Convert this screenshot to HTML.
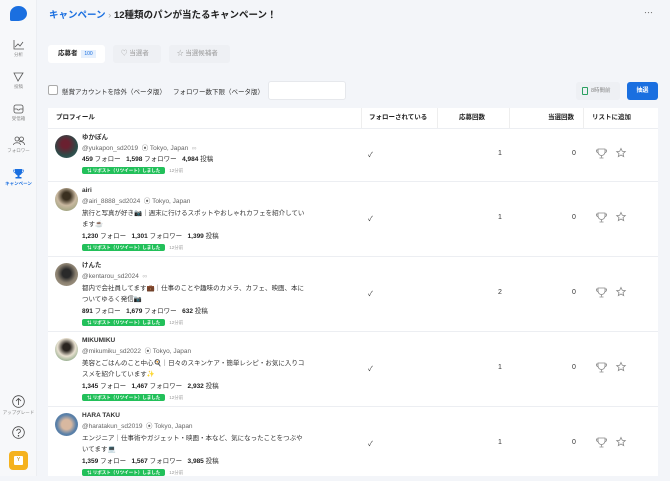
<!DOCTYPE html>
<html><head><meta charset="utf-8"><style>
*{box-sizing:border-box;margin:0;padding:0}
body{width:670px;height:476px;overflow:hidden;background:#f3f5f9;font-family:"Liberation Sans","Noto Sans CJK JP",sans-serif;color:#222;position:relative;font-size:7px}
.side{position:absolute;left:0;top:0;width:37px;height:476px;background:#f7f8fa;border-right:1px solid #eceef2}
.si{position:absolute;left:0;width:37px;text-align:center;font-size:4.5px;color:#888}
.si svg{display:block;margin:0 auto 2px}
.bc{position:absolute;left:49px;top:7px;font-size:9.5px;font-weight:bold}
.tab{position:absolute;top:45px;height:18px;border-radius:3px;font-size:6.5px;line-height:18px;padding-left:10px}
.tbl{position:absolute;left:48px;top:108px;width:610px;height:368px;background:#fff}
.hd{position:absolute;top:0;height:20px;line-height:20px;font-weight:bold;font-size:6.5px;border-right:1px solid #eee}
.row{position:absolute;left:0;width:610px;border-top:1px solid #eceef2}
.av{position:absolute;left:7px;width:23px;height:23px;border-radius:50%}
.tx{position:absolute;left:34px;font-size:6.5px;line-height:11.4px;color:#333;white-space:nowrap}
.tx b{color:#222}
.nm{font-weight:bold}
.badge{display:inline-block;background:#22c05a;color:#fff;font-size:4.5px;line-height:7px;padding:0 5px;border-radius:2px;font-weight:bold;vertical-align:middle}
.tm{font-size:4.5px;color:#999;margin-left:4px}
.g{color:#666}
.c{position:absolute;font-size:7px;color:#333}
.ic{position:absolute}
</style></head><body>
<div class="side">
 <div style="position:absolute;left:10px;top:6px;width:17px;height:15px;background:#1a6fe0;border-radius:50% 50% 50% 10%"></div>
 <div class="si" style="top:40px"><svg width="11" height="10" viewBox="0 0 11 10" fill="none" stroke="#555" stroke-width=".8"><path d="M1 0v9h10M2 7l3-3 2 2 3-4"/></svg>分析</div>
 <div class="si" style="top:72px"><svg width="11" height="10" viewBox="0 0 11 10" fill="none" stroke="#555" stroke-width=".8"><path d="M1 1h9L5 9z"/></svg>投稿</div>
 <div class="si" style="top:104px"><svg width="11" height="10" viewBox="0 0 11 10" fill="none" stroke="#555" stroke-width=".8"><rect x="1" y="1" width="9" height="8" rx="2"/><path d="M1 5h3l1 1h1l1-1h3"/></svg>受信箱</div>
 <div class="si" style="top:136px"><svg width="12" height="10" viewBox="0 0 12 10" fill="none" stroke="#555" stroke-width=".8"><circle cx="4" cy="3" r="2"/><circle cx="8.5" cy="3" r="2"/><path d="M0.5 9c0-3 7-3 7 0M6 6c2-1 5.5 0 5.5 3"/></svg>フォロワー</div>
 <div class="si" style="top:168px;color:#1a6fe0;font-weight:bold"><svg width="11" height="11" viewBox="0 0 11 11"><path d="M2 1h7v3a3.5 3.5 0 0 1-7 0z M4.5 7h2v2h2v1.5h-6V9h2z" fill="#1a6fe0"/><path d="M2 2H.7v1a2 2 0 0 0 2 2M9 2h1.3v1a2 2 0 0 1-2 2" stroke="#1a6fe0" fill="none" stroke-width=".7"/></svg>キャンペーン</div>
 <div class="si" style="top:395px"><svg width="13" height="13" viewBox="0 0 13 13" fill="none" stroke="#444" stroke-width=".8"><circle cx="6.5" cy="6.5" r="5.8"/><path d="M6.5 10V3.5M4 6l2.5-2.5L9 6"/></svg>アップグレード</div>
 <div class="si" style="top:426px"><svg width="13" height="13" viewBox="0 0 13 13" fill="none" stroke="#444" stroke-width=".8"><circle cx="6.5" cy="6.5" r="5.8"/><path d="M4.8 5a1.8 1.8 0 1 1 2.4 1.6c-.6.3-.7.7-.7 1.4"/><circle cx="6.5" cy="9.8" r=".4" fill="#444"/></svg></div>
 <div style="position:absolute;left:9px;top:451px;width:19px;height:19px;background:#f5b21e;border-radius:4px"><div style="position:absolute;left:5px;top:5px;width:9px;height:9px;background:#fff;border-radius:1px;font-size:5px;text-align:center;line-height:9px;color:#b07c00">Y</div></div>
</div>
<div class="bc"><span style="color:#1a6fe0">キャンペーン</span> <span style="color:#aaa;font-weight:normal">›</span> 12種類のパンが当たるキャンペーン！</div>
<div style="position:absolute;left:644px;top:6px;color:#777;font-size:9px">⋯</div>
<div class="tab" style="left:48px;width:57px;background:#fff;font-weight:bold">応募者 <span style="background:#e6f0fd;color:#1a6fe0;font-size:5px;padding:1px 3px;font-weight:normal;margin-left:2px">100</span></div>
<div class="tab" style="left:113px;width:48px;background:#eef0f4;color:#999;padding-left:8px">♡ 当選者</div>
<div class="tab" style="left:169px;width:61px;background:#eef0f4;color:#999;padding-left:8px">☆ 当選候補者</div>
<div style="position:absolute;left:48px;top:85px;width:10px;height:10px;border:1px solid #aaa;border-radius:2px;background:#fff"></div>
<div style="position:absolute;left:62px;top:86px;font-size:6.5px;color:#333">懸賞アカウントを除外（ベータ版）</div>
<div style="position:absolute;left:173px;top:86px;font-size:6.5px;color:#333">フォロワー数下限（ベータ版）</div>
<div style="position:absolute;left:268px;top:81px;width:78px;height:19px;background:#fff;border:1px solid #e6e8ec;border-radius:3px"></div>
<div style="position:absolute;left:576px;top:82px;width:44px;height:18px;background:#eef0f4;border-radius:3px;font-size:5.5px;color:#888;line-height:18px;padding-left:6px"><span style="display:inline-block;width:6px;height:8px;border:1px solid #2aa060;border-radius:1px;vertical-align:middle;margin-right:3px"></span>8時間前</div>
<div style="position:absolute;left:627px;top:82px;width:31px;height:18px;background:#1a6fe0;border-radius:3px;color:#fff;font-size:6px;font-weight:bold;text-align:center;line-height:18px">抽選</div>
<div class="tbl">
 <div class="hd" style="left:0;width:314px;padding-left:8px">プロフィール</div>
 <div class="hd" style="left:314px;width:76px;padding-left:7px">フォローされている</div>
 <div class="hd" style="left:390px;width:72px;text-align:right;padding-right:24px">応募回数</div>
 <div class="hd" style="left:462px;width:74px;text-align:right;padding-right:9px">当選回数</div>
 <div class="hd" style="left:536px;width:74px;padding-left:8px;border:none">リストに追加</div>

 <div class="row" style="top:20px;height:53px">
  <div class="av" style="top:6px;background:radial-gradient(circle at 45% 40%,#6a2030 20%,#2d4a48 60%,#3d6a6a)"></div>
  <div class="tx" style="top:3px;line-height:11px"><div class="nm">ゆかぽん</div><div class="g">@yukapon_sd2019 &nbsp;⦿ Tokyo, Japan &nbsp;<span style="color:#bbb">∞</span></div><div><b>459</b> フォロー &nbsp; <b>1,598</b> フォロワー &nbsp; <b>4,984</b> 投稿</div><div><span class="badge">⇅ リポスト（リツイート）しました</span><span class="tm">12分前</span></div></div>
 </div>
 <div class="row" style="top:73px;height:75px">
  <div class="av" style="top:6px;background:radial-gradient(circle at 50% 35%,#3a3020 20%,#c9b8a0 50%,#8a9a70)"></div>
  <div class="tx" style="top:3px"><div class="nm">airi</div><div class="g">@airi_8888_sd2024 &nbsp;⦿ Tokyo, Japan</div><div>旅行と写真が好き📷｜週末に行けるスポットやおしゃれカフェを紹介してい</div><div>ます☕</div><div><b>1,230</b> フォロー &nbsp; <b>1,301</b> フォロワー &nbsp; <b>1,399</b> 投稿</div><div><span class="badge">⇅ リポスト（リツイート）しました</span><span class="tm">12分前</span></div></div>
 </div>
 <div class="row" style="top:148px;height:75px">
  <div class="av" style="top:6px;background:radial-gradient(circle at 50% 45%,#2a2a2a 25%,#8a8070 55%,#b0a590)"></div>
  <div class="tx" style="top:3px"><div class="nm">けんた</div><div class="g">@kentarou_sd2024 &nbsp;<span style="color:#bbb">∞</span></div><div>都内で会社員してます💼｜仕事のことや趣味のカメラ、カフェ、映画、本に</div><div>ついてゆるく発信📷</div><div><b>891</b> フォロー &nbsp; <b>1,679</b> フォロワー &nbsp; <b>632</b> 投稿</div><div><span class="badge">⇅ リポスト（リツイート）しました</span><span class="tm">12分前</span></div></div>
 </div>
 <div class="row" style="top:223px;height:75px">
  <div class="av" style="top:6px;background:radial-gradient(circle at 50% 40%,#2a2520 20%,#e8e0d0 50%,#5a8a60)"></div>
  <div class="tx" style="top:3px"><div class="nm">MIKUMIKU</div><div class="g">@mikumiku_sd2022 &nbsp;⦿ Tokyo, Japan</div><div>美容とごはんのこと中心🍳｜日々のスキンケア・簡単レシピ・お気に入りコ</div><div>スメを紹介しています✨</div><div><b>1,345</b> フォロー &nbsp; <b>1,467</b> フォロワー &nbsp; <b>2,932</b> 投稿</div><div><span class="badge">⇅ リポスト（リツイート）しました</span><span class="tm">12分前</span></div></div>
 </div>
 <div class="row" style="top:298px;height:75px">
  <div class="av" style="top:6px;background:radial-gradient(circle at 50% 50%,#d8b8a0 30%,#5a80a8 60%)"></div>
  <div class="tx" style="top:3px"><div class="nm">HARA TAKU</div><div class="g">@haratakun_sd2019 &nbsp;⦿ Tokyo, Japan</div><div>エンジニア｜仕事術やガジェット・映画・本など、気になったことをつぶや</div><div>いてます💻</div><div><b>1,359</b> フォロー &nbsp; <b>1,567</b> フォロワー &nbsp; <b>3,985</b> 投稿</div><div><span class="badge">⇅ リポスト（リツイート）しました</span><span class="tm">12分前</span></div></div>
 </div>
 <div class="c" style="left:320px;top:42px">✓</div><div class="c" style="left:450px;top:42px">1</div><div class="c" style="left:524px;top:42px">0</div>
 <div class="c" style="left:320px;top:106px">✓</div><div class="c" style="left:450px;top:106px">1</div><div class="c" style="left:524px;top:106px">0</div>
 <div class="c" style="left:320px;top:181px">✓</div><div class="c" style="left:450px;top:181px">2</div><div class="c" style="left:524px;top:181px">0</div>
 <div class="c" style="left:320px;top:256px">✓</div><div class="c" style="left:450px;top:256px">1</div><div class="c" style="left:524px;top:256px">0</div>
 <div class="c" style="left:320px;top:331px">✓</div><div class="c" style="left:450px;top:331px">1</div><div class="c" style="left:524px;top:331px">0</div>
 <svg class="ic" style="left:548px;top:0" width="40" height="368" fill="none" stroke="#888" stroke-width=".8">
  <g id="p"><path d="M2 41h7v3a3.5 3.5 0 0 1-7 0zM5.5 47.5v2M3.5 50h4M2 42H.5v1a1.5 1.5 0 0 0 1.8 1.5M9 42h1.5v1a1.5 1.5 0 0 1-1.8 1.5"/><path d="M25 40.5l1.3 2.8 3 .3-2.3 2 .7 3-2.7-1.6-2.7 1.6.7-3-2.3-2 3-.3z"/></g>
  <use href="#p" y="64"/><use href="#p" y="139"/><use href="#p" y="214"/><use href="#p" y="289"/>
 </svg>
</div>
</body></html>
